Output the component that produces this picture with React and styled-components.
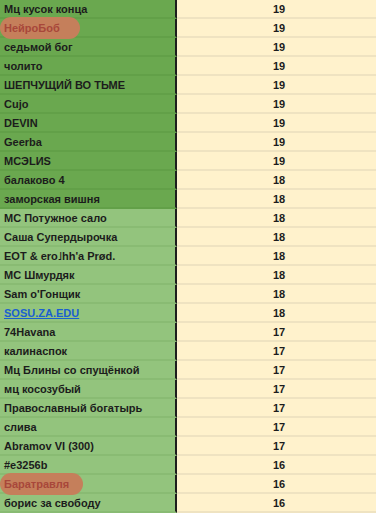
import React from "react";
import styled, { createGlobalStyle } from "styled-components";

const GlobalStyle = createGlobalStyle`
  html, body {
    margin: 0;
    padding: 0;
    background: #fff2cc;
    overflow: hidden;
  }
`;

const Sheet = styled.div`
  display: flex;
  flex-direction: column;
  width: 376px;
  height: 513px;
  overflow: hidden;
  font-family: "Liberation Sans", Arial, sans-serif;
  font-weight: 700;
  font-size: 11px;
  color: #1c1c1c;
`;

const Row = styled.div`
  display: flex;
  height: 19px;
  flex-shrink: 0;
`;

const NameCell = styled.div`
  position: relative;
  width: 177px;
  box-sizing: border-box;
  padding: 1px 0 0 4px;
  display: flex;
  align-items: center;
  white-space: nowrap;
  background-color: ${(props) => (props.dark ? "#6aa84f" : "#93c47d")};
  border-bottom: 2px solid ${(props) => (props.dark ? "#62a048" : "#89bb73")};
  border-right: 2px solid #1d1d1d;
  z-index: ${(props) => (props.raised ? 1 : 0)};
`;

const ScoreCell = styled.div`
  flex: 1;
  box-sizing: border-box;
  padding: 1px 0 0 5px;
  display: flex;
  align-items: center;
  justify-content: center;
  background-color: #fff2cc;
  border-bottom: 2px solid #efe3c1;
`;

const Highlight = styled.span`
  position: absolute;
  left: 0;
  top: -2px;
  height: 22px;
  width: ${(props) => props.width}px;
  border-radius: 11px;
  background-color: #c57f5b;
`;

const Name = styled.span`
  position: relative;
  color: ${(props) => props.color || "inherit"};
  text-decoration: ${(props) => (props.link ? "underline" : "none")};
`;

const rows = [
  { name: "Мц кусок конца", score: 19, dark: true },
  { name: "НейроБоб", score: 19, dark: true, mark: 80 },
  { name: "седьмой бог", score: 19, dark: true },
  { name: "чолито", score: 19, dark: true },
  { name: "ШЕПЧУЩИЙ ВО ТЬМЕ", score: 19, dark: true },
  { name: "Cujo", score: 19, dark: true },
  { name: "DEVIN", score: 19, dark: true },
  { name: "Geerba", score: 19, dark: true },
  { name: "MCЭLИS", score: 19, dark: true },
  { name: "балаково 4", score: 18, dark: true },
  { name: "заморская вишня", score: 18, dark: true },
  { name: "МС Потужное сало", score: 18 },
  { name: "Саша Супердырочка", score: 18 },
  { name: "EОТ & ero\u02E9hh'a Prød.", score: 18 },
  { name: "МС Шмурдяк", score: 18 },
  { name: "Sam o'Гонщик", score: 18 },
  { name: "SOSU.ZA.EDU", score: 18, link: true },
  { name: "74Havana", score: 17 },
  { name: "калинаспок", score: 17 },
  { name: "Мц Блины со спущёнкой", score: 17 },
  { name: "мц косозубый", score: 17 },
  { name: "Православный богатырь", score: 17 },
  { name: "слива", score: 17 },
  { name: "Abramov VI (300)", score: 17 },
  { name: "#e3256b", score: 16 },
  { name: "Баратравля", score: 16, mark: 83 },
  { name: "борис за свободу", score: 16 },
];

export default function App() {
  return (
    <>
      <GlobalStyle />
      <Sheet>
        {rows.map((row) => (
          <Row key={row.name}>
            <NameCell dark={row.dark} raised={!!row.mark}>
              {row.mark && <Highlight width={row.mark} />}
              <Name
                link={row.link}
                color={row.link ? "#1a5fd0" : row.mark ? "#a8473a" : ""}
              >
                {row.name}
              </Name>
            </NameCell>
            <ScoreCell>{row.score}</ScoreCell>
          </Row>
        ))}
      </Sheet>
    </>
  );
}
